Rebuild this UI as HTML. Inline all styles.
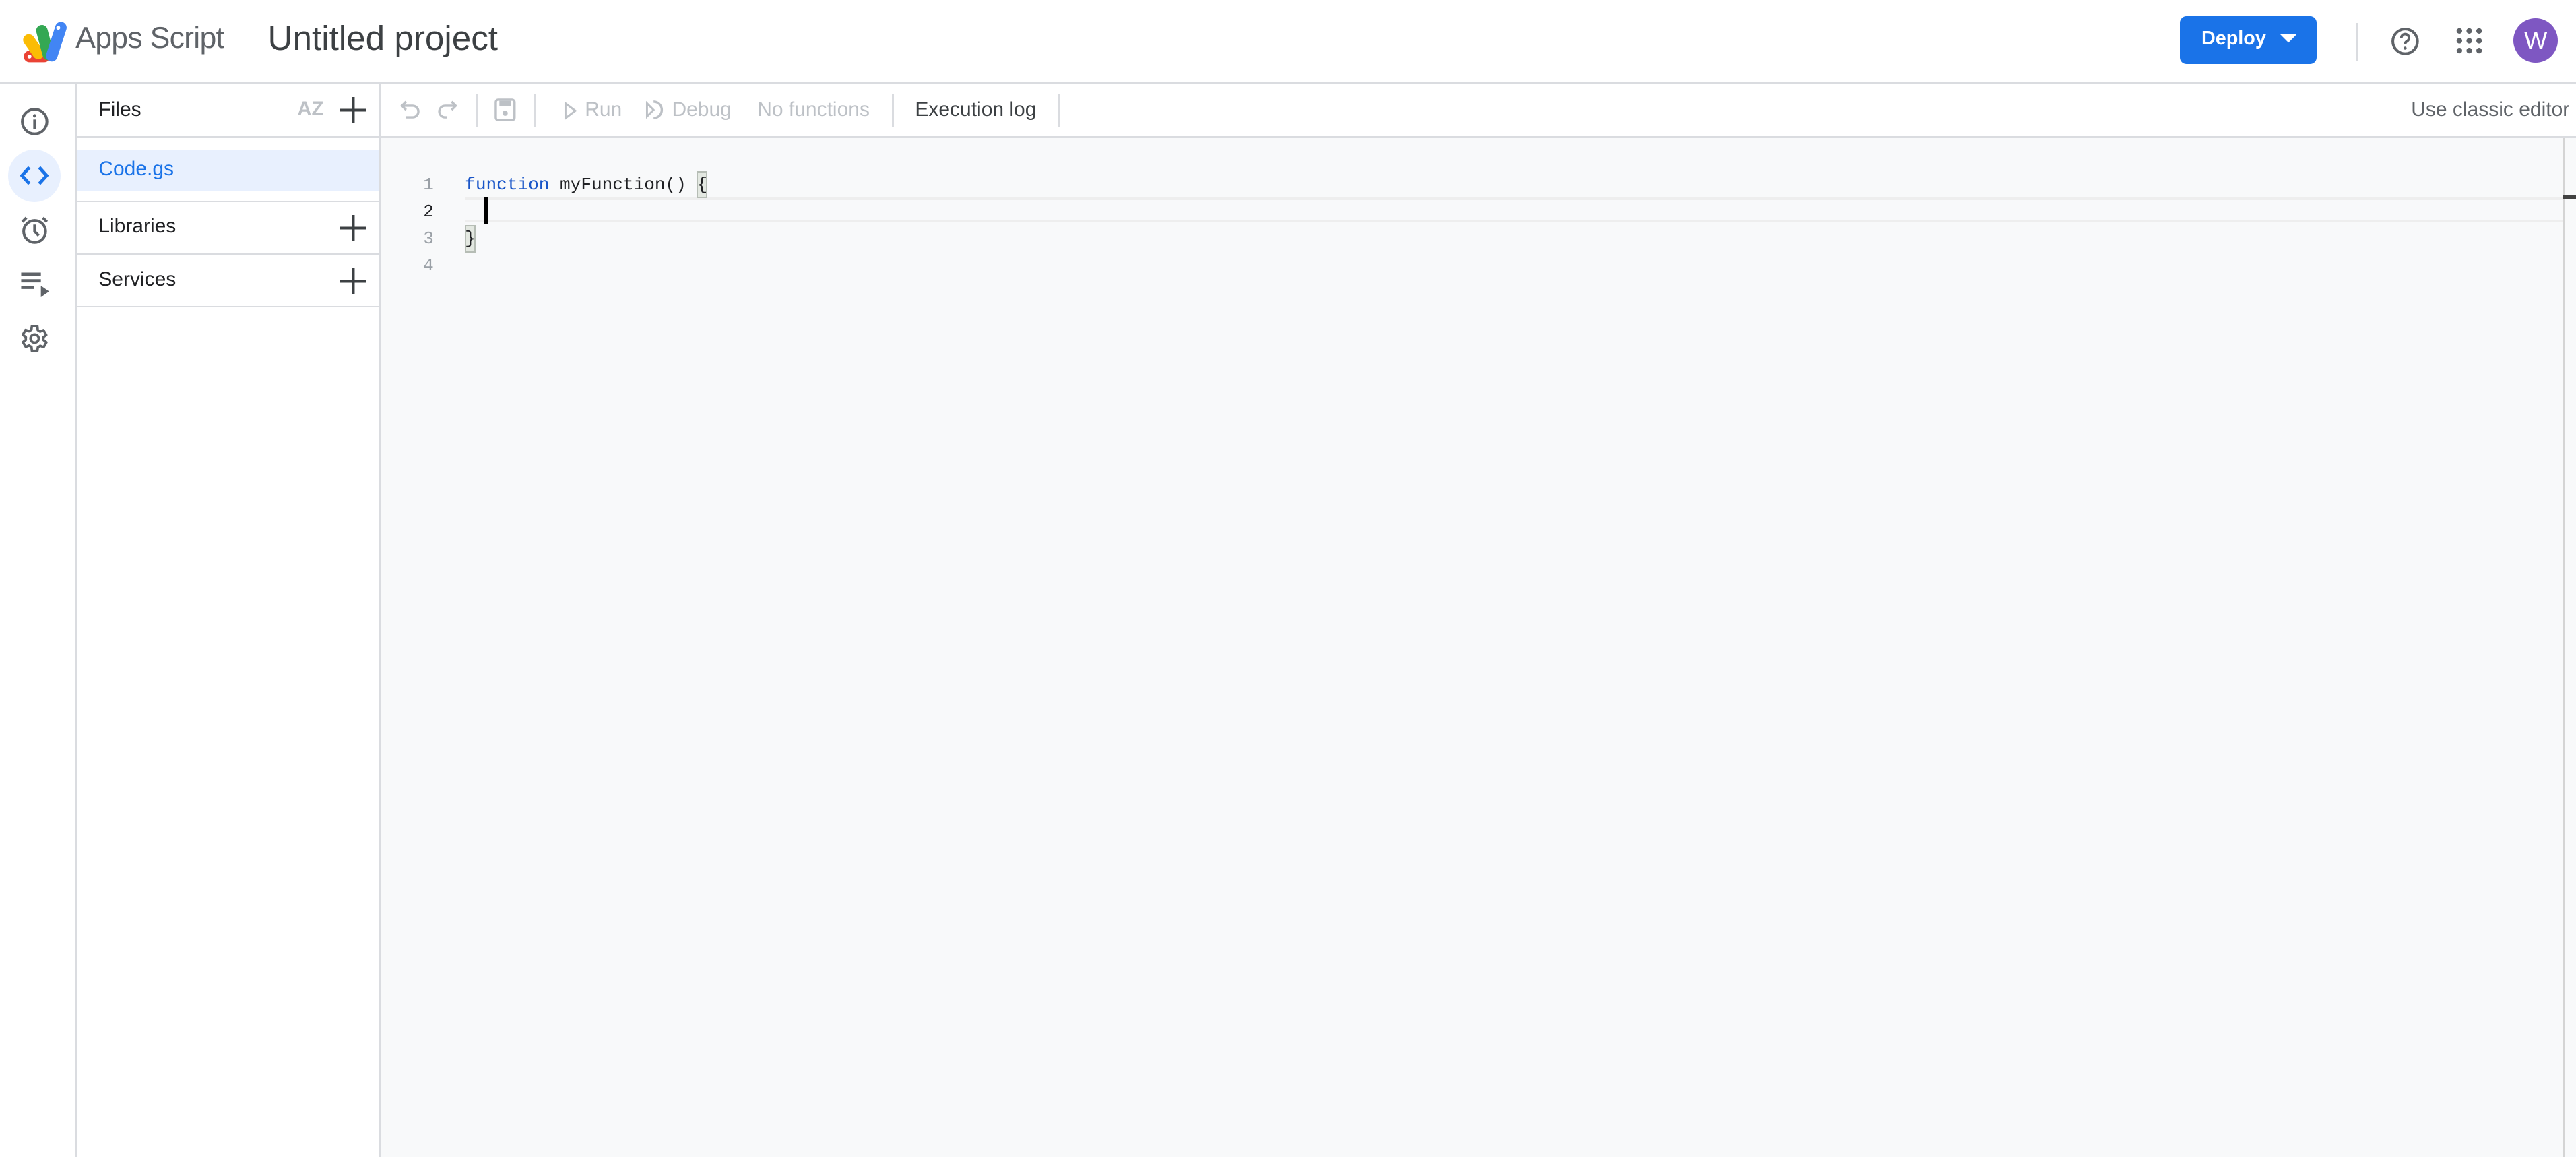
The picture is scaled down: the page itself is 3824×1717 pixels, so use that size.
<!DOCTYPE html>
<html><head><meta charset="utf-8"><style>
html,body{margin:0;padding:0}
body{width:1568px;height:704px;zoom:2.43878;font-family:"Liberation Sans",sans-serif;background:#fff;position:relative;overflow:hidden;color:#202124}
.a{position:absolute}
.t{font-size:12.3px;white-space:nowrap}
</style></head><body>
<!-- header -->
<svg class="a" style="left:14px;top:12px" width="28" height="28" viewBox="0 0 28 28">
<rect x="0.5" y="19" width="16" height="7" rx="3.5" fill="#ea4335"/>
<rect x="3" y="8" width="7" height="17" rx="3.5" fill="#fbbc04" transform="rotate(-35 6.5 16.5)"/>
<rect x="10" y="3" width="7" height="22" rx="3.5" fill="#34a853" transform="rotate(-15 13.5 14)"/>
<rect x="17" y="1" width="7" height="25" rx="3.5" fill="#4285f4" transform="rotate(18 20.5 13)"/>
<circle cx="21.5" cy="5" r="1.2" fill="#fff"/><circle cx="4" cy="22.5" r="1.2" fill="#fff"/>
</svg>
<div class="a" style="left:46px;top:13px;font-size:18.3px;color:#5f6368;letter-spacing:-0.3px;white-space:nowrap">Apps Script</div>
<div class="a" style="left:163px;top:11px;font-size:21px;color:#3c4043;white-space:nowrap">Untitled project</div>
<div class="a" style="left:1327px;top:10px;width:83px;height:29px;background:#1a73e8;border-radius:4px"></div>
<div class="a" style="left:1340px;top:17px;color:#fff;font-weight:bold;font-size:11.8px;white-space:nowrap">Deploy</div>
<svg class="a" style="left:1388px;top:21px" width="10" height="6"><path d="M0 0H10L5 5Z" fill="#fff"/></svg>
<div class="a" style="left:1434px;top:14px;width:1px;height:23px;background:#dadce0"></div>
<svg class="a" style="left:1454px;top:15px" width="20" height="20" viewBox="0 0 24 24"><circle cx="12" cy="12" r="9" fill="none" stroke="#5f6368" stroke-width="2"/><path d="M9.2 9.5a2.8 2.8 0 1 1 4 2.5c-.9.5-1.2 1-1.2 2" fill="none" stroke="#5f6368" stroke-width="1.9"/><circle cx="12" cy="17" r="1.1" fill="#5f6368"/></svg>
<svg class="a" style="left:1495px;top:17px" width="16" height="16" viewBox="0 0 16 16" fill="#5f6368"><circle cx="2" cy="2" r="1.7"/><circle cx="8" cy="2" r="1.7"/><circle cx="14" cy="2" r="1.7"/><circle cx="2" cy="8" r="1.7"/><circle cx="8" cy="8" r="1.7"/><circle cx="14" cy="8" r="1.7"/><circle cx="2" cy="14" r="1.7"/><circle cx="8" cy="14" r="1.7"/><circle cx="14" cy="14" r="1.7"/></svg>
<div class="a" style="left:1530px;top:11px;width:27px;height:27px;border-radius:50%;background:#7e57c2;color:#fff;font-size:15px;text-align:center;line-height:27px">W</div>
<div class="a" style="left:0;top:50px;width:1568px;height:1px;background:#dadce0"></div>
<!-- left rail -->
<div class="a" style="left:46px;top:51px;width:1px;height:653px;background:#dadce0"></div>
<svg class="a" style="left:11px;top:64px" width="20" height="20" viewBox="0 0 24 24"><circle cx="12" cy="12" r="9" fill="none" stroke="#5f6368" stroke-width="2"/><rect x="11" y="10.5" width="2" height="7" fill="#5f6368"/><circle cx="12" cy="7.8" r="1.2" fill="#5f6368"/></svg>
<div class="a" style="left:5px;top:91px;width:32px;height:32px;border-radius:50%;background:#e8f0fe"></div>
<svg class="a" style="left:12px;top:99px" width="18" height="16" viewBox="0 0 18 16"><path d="M6 3L1.5 8L6 13M12 3L16.5 8L12 13" fill="none" stroke="#1a73e8" stroke-width="2"/></svg>
<svg class="a" style="left:11px;top:130px" width="20" height="20" viewBox="0 0 24 24"><circle cx="12" cy="13" r="8" fill="none" stroke="#5f6368" stroke-width="2"/><path d="M12 8v5l3 3M3 6l3-3M21 6l-3-3" fill="none" stroke="#5f6368" stroke-width="2"/></svg>
<svg class="a" style="left:12px;top:165px" width="20" height="16" viewBox="0 0 20 16"><path d="M1 2h12M1 6h12M1 10h8" stroke="#5f6368" stroke-width="2"/><path d="M13 9l5 3.5-5 3.5z" fill="#5f6368"/></svg>
<svg class="a" style="left:11px;top:196px" width="20" height="20" viewBox="0 0 24 24"><path d="M19.4 13a7.5 7.5 0 0 0 0-2l2.1-1.6-2-3.5-2.5 1a7 7 0 0 0-1.7-1L15 3h-4l-.4 2.7a7 7 0 0 0-1.7 1l-2.5-1-2 3.5L6.6 11a7.5 7.5 0 0 0 0 2l-2.1 1.6 2 3.5 2.5-1a7 7 0 0 0 1.7 1L11 21h4l.4-2.7a7 7 0 0 0 1.7-1l2.5 1 2-3.5z" fill="none" stroke="#5f6368" stroke-width="1.8" stroke-linejoin="round" transform="translate(-1 0)"/><circle cx="12" cy="12" r="3" fill="none" stroke="#5f6368" stroke-width="1.8"/></svg>
<!-- files panel -->
<div class="a" style="left:231px;top:51px;width:1px;height:653px;background:#dadce0"></div>
<div class="a t" style="left:60px;top:60px">Files</div>
<div class="a" style="left:181px;top:60px;font-size:12px;color:#bdc1c6;font-weight:bold">AZ</div>
<svg class="a" style="left:207px;top:59px" width="16" height="16"><path d="M8 0v16M0 8h16" stroke="#3c4043" stroke-width="1.6"/></svg>
<div class="a" style="left:47px;top:83px;width:184px;height:1px;background:#dadce0"></div>
<div class="a" style="left:47px;top:91px;width:184px;height:25px;background:#e8f0fe"></div>
<div class="a t" style="left:60px;top:96px;color:#1a73e8">Code.gs</div>
<div class="a" style="left:47px;top:122px;width:184px;height:1px;background:#dadce0"></div>
<div class="a t" style="left:60px;top:131px">Libraries</div>
<svg class="a" style="left:207px;top:131px" width="16" height="16"><path d="M8 0v16M0 8h16" stroke="#3c4043" stroke-width="1.6"/></svg>
<div class="a" style="left:47px;top:154px;width:184px;height:1px;background:#dadce0"></div>
<div class="a t" style="left:60px;top:163px">Services</div>
<svg class="a" style="left:207px;top:163px" width="16" height="16"><path d="M8 0v16M0 8h16" stroke="#3c4043" stroke-width="1.6"/></svg>
<div class="a" style="left:47px;top:186px;width:184px;height:1px;background:#dadce0"></div>
<!-- toolbar -->
<svg class="a" style="left:243px;top:60px" width="14" height="14" viewBox="0 0 14 14"><path d="M4 2L1.5 4.5 4 7M1.5 4.5H8a3.5 3.5 0 0 1 0 7H4" fill="none" stroke="#bdc1c6" stroke-width="1.4"/></svg>
<svg class="a" style="left:265px;top:60px" width="14" height="14" viewBox="0 0 14 14"><path d="M10 2l2.5 2.5L10 7M12.5 4.5H6a3.5 3.5 0 0 0 0 7h1" fill="none" stroke="#bdc1c6" stroke-width="1.4"/></svg>
<div class="a" style="left:290px;top:57px;width:1px;height:20px;background:#dadce0"></div>
<svg class="a" style="left:301px;top:60px" width="13" height="14" viewBox="0 0 13 14"><rect x="0.8" y="0.8" width="11.4" height="12.4" rx="1.5" fill="none" stroke="#bdc1c6" stroke-width="1.4"/><rect x="3" y="1.5" width="7" height="3" fill="#bdc1c6"/><circle cx="6.5" cy="9" r="1.6" fill="#bdc1c6"/></svg>
<div class="a" style="left:325px;top:57px;width:1px;height:20px;background:#dadce0"></div>
<svg class="a" style="left:343px;top:62px" width="8" height="11"><path d="M1 1l6 4.5L1 10z" fill="none" stroke="#bdc1c6" stroke-width="1.2"/></svg>
<div class="a t" style="left:356px;top:60px;color:#bdc1c6">Run</div>
<svg class="a" style="left:393px;top:60px" width="14" height="14" viewBox="0 0 14 14"><path d="M1 3l4 4-4 4z" fill="none" stroke="#bdc1c6" stroke-width="1.2"/><path d="M5 2a5 5 0 1 1 0 10" fill="none" stroke="#bdc1c6" stroke-width="1.4"/></svg>
<div class="a t" style="left:409px;top:60px;color:#bdc1c6">Debug</div>
<div class="a t" style="left:461px;top:60px;color:#bdc1c6">No functions</div>
<div class="a" style="left:543px;top:57px;width:1px;height:20px;background:#dadce0"></div>
<div class="a t" style="left:557px;top:60px;color:#3c4043">Execution log</div>
<div class="a" style="left:644px;top:57px;width:1px;height:20px;background:#dadce0"></div>
<div class="a t" style="right:4px;top:60px;color:#5f6368">Use classic editor</div>
<div class="a" style="left:232px;top:83px;width:1336px;height:1px;background:#dadce0"></div>
<!-- editor -->
<div class="a" style="left:232px;top:84px;width:1336px;height:620px;background:#f8f9fa"></div>
<div class="a" style="left:283px;top:120px;width:1277px;height:12px;border-top:2px solid #eeeeee;border-bottom:2px solid #eeeeee"></div>
<div class="a" style="left:1560px;top:84px;width:1px;height:620px;background:#d4d4d4"></div>
<div class="a" style="left:1560px;top:119px;width:8px;height:2px;background:#424242"></div>
<div class="a" style="left:424px;top:104px;width:5px;height:15px;background:#e3e8e1;border:1px solid #b6bdb5"></div>
<div class="a" style="left:283px;top:137px;width:5px;height:15px;background:#e3e8e1;border:1px solid #b6bdb5"></div>
<div class="a" style="left:295px;top:120px;width:2px;height:16px;background:#000"></div>
<div class="a" style="left:252px;top:104px;font-family:'Liberation Mono',monospace;font-size:10.6px;line-height:16.4px;color:#9aa0a6;width:12px;text-align:right">1<br><span style="color:#202124">2</span><br>3<br>4</div>
<div class="a" style="left:283px;top:104px;font-family:'Liberation Mono',monospace;font-size:10.7px;line-height:16.4px;color:#202124;white-space:pre"><span style="color:#1a56c8">function</span> myFunction() {

}</div>
</body></html>
